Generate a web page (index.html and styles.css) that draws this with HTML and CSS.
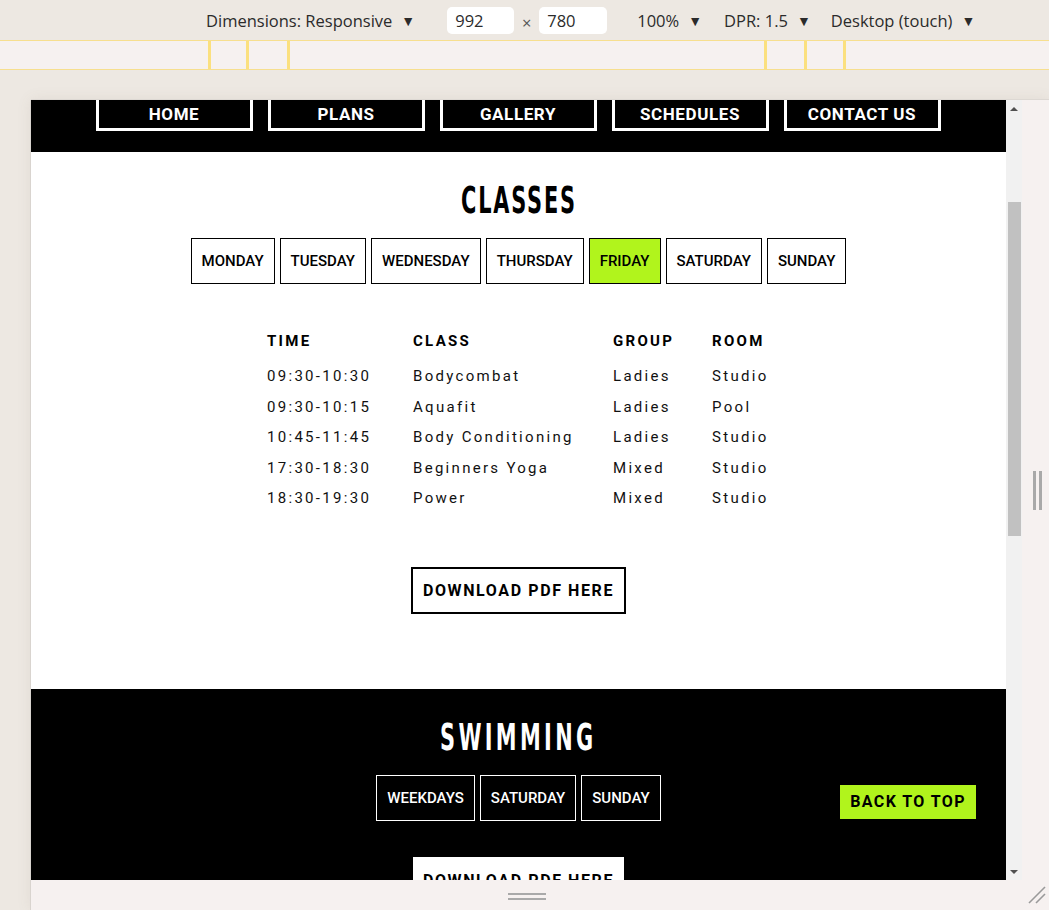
FILE: index.html
```html
<!DOCTYPE html>
<html lang="en">
<head>
<meta charset="utf-8">
<title>Schedules</title>
<link rel="stylesheet" href="styles.css">
</head>
<body>
<div class="toolbar">
  <span class="tb-item tb-dims">Dimensions: Responsive<span class="caret">▼</span></span>
  <span class="tb-size">
    <span class="tb-input">992</span>
    <span class="tb-times">×</span>
    <span class="tb-input tb-input-h">780</span>
  </span>
  <span class="tb-item tb-zoom">100%<span class="caret">▼</span></span>
  <span class="tb-item tb-dpr">DPR: 1.5<span class="caret">▼</span></span>
  <span class="tb-item tb-device">Desktop (touch)<span class="caret">▼</span></span>
</div>

<div class="ruler">
  <span class="mq mq-1"></span>
  <span class="mq mq-2"></span>
  <span class="mq mq-3"></span>
  <span class="mq mq-4"></span>
  <span class="mq mq-5"></span>
  <span class="mq mq-6"></span>
</div>

<div class="stage">
  <div class="frame">
    <div class="viewport">
      <div class="page">
        <header class="site-nav">
          <nav class="nav-list">
            <a class="nav-btn">HOME</a>
            <a class="nav-btn">PLANS</a>
            <a class="nav-btn">GALLERY</a>
            <a class="nav-btn">SCHEDULES</a>
            <a class="nav-btn">CONTACT US</a>
          </nav>
        </header>

        <section class="classes">
          <h2 class="section-title"><span>CLASSES</span></h2>
          <div class="tabs">
            <button class="tab">MONDAY</button>
            <button class="tab">TUESDAY</button>
            <button class="tab">WEDNESDAY</button>
            <button class="tab">THURSDAY</button>
            <button class="tab tab-active">FRIDAY</button>
            <button class="tab">SATURDAY</button>
            <button class="tab">SUNDAY</button>
          </div>
          <table class="timetable">
            <colgroup>
              <col class="col-time"><col class="col-class"><col class="col-group"><col class="col-room">
            </colgroup>
            <thead>
              <tr><th>TIME</th><th>CLASS</th><th>GROUP</th><th>ROOM</th></tr>
            </thead>
            <tbody>
              <tr><td>09:30-10:30</td><td>Bodycombat</td><td>Ladies</td><td>Studio</td></tr>
              <tr><td>09:30-10:15</td><td>Aquafit</td><td>Ladies</td><td>Pool</td></tr>
              <tr><td>10:45-11:45</td><td>Body Conditioning</td><td>Ladies</td><td>Studio</td></tr>
              <tr><td>17:30-18:30</td><td>Beginners Yoga</td><td>Mixed</td><td>Studio</td></tr>
              <tr><td>18:30-19:30</td><td>Power</td><td>Mixed</td><td>Studio</td></tr>
            </tbody>
          </table>
          <div class="download-wrap">
            <a class="download">DOWNLOAD PDF HERE</a>
          </div>
        </section>

        <section class="swimming">
          <h2 class="section-title section-title-wide"><span>SWIMMING</span></h2>
          <div class="tabs">
            <button class="tab tab-dark">WEEKDAYS</button>
            <button class="tab tab-dark">SATURDAY</button>
            <button class="tab tab-dark">SUNDAY</button>
          </div>
          <div class="download-wrap download-wrap-dark">
            <a class="download download-light">DOWNLOAD PDF HERE</a>
          </div>
        </section>
      </div>
      <a class="back-top">BACK TO TOP</a>
    </div>

    <div class="scrollbar">
      <div class="sb-arrow"><span class="tri tri-up"></span></div>
      <div class="sb-track"><div class="sb-thumb"></div></div>
      <div class="sb-arrow"><span class="tri tri-down"></span></div>
    </div>

    <div class="side-strip">
      <span class="grip-v"></span><span class="grip-v"></span>
    </div>

    <div class="bottom-strip">
      <span class="grip-h"></span><span class="grip-h"></span>
    </div>

    <div class="corner">
      <svg width="20" height="20" viewBox="0 0 20 20">
        <line x1="18" y1="2" x2="2" y2="18" stroke="#9a9a9a" stroke-width="1.6"/>
        <line x1="18" y1="9" x2="9" y2="18" stroke="#9a9a9a" stroke-width="1.6"/>
      </svg>
    </div>
  </div>
</div>
</body>
</html>
```

FILE: styles.css
```css
* { box-sizing: border-box; }

html, body {
  margin: 0;
  padding: 0;
}

body {
  width: 1049px;
  height: 910px;
  overflow: hidden;
  background: #ede8e2;
  font-family: Roboto, "Liberation Sans", sans-serif;
}

/* ---------- devtools toolbar ---------- */
.toolbar {
  height: 40px;
  display: flex;
  align-items: center;
  padding-left: 206px;
  font-family: "Open Sans", "Noto Sans", sans-serif;
  font-size: 16.5px;
  color: #2b2b2b;
  white-space: nowrap;
}

.caret {
  font-size: 14px;
  margin-left: 9px;
  position: relative;
  top: -1px;
}

.tb-size {
  display: flex;
  align-items: center;
  margin-left: 32px;
}

.tb-input {
  width: 67px;
  height: 27px;
  background: #fff;
  border-radius: 5px;
  padding-left: 8px;
  line-height: 27px;
}

.tb-input-h { width: 68px; }

.tb-times {
  width: 25px;
  text-align: center;
  color: #555;
  position: relative;
  top: 2px;
}

.tb-zoom { margin-left: 30px; }
.tb-dpr { margin-left: 22px; }
.tb-device { margin-left: 20px; }

/* ---------- ruler ---------- */
.ruler {
  position: relative;
  height: 30px;
  background: #f6f1f0;
  border-top: 1px solid #f7df8f;
  border-bottom: 1px solid #f7df8f;
}

.mq {
  position: absolute;
  top: 0;
  bottom: 0;
  width: 3px;
  background: #fbe07f;
}
.mq-1 { left: 208px; }
.mq-2 { left: 246px; }
.mq-3 { left: 287px; }
.mq-4 { left: 764px; }
.mq-5 { left: 804px; }
.mq-6 { left: 843px; }

/* ---------- stage / frame ---------- */
.stage {
  padding: 30px 0 0 31px;
}

.frame {
  display: grid;
  grid-template-columns: 975px 16px 1fr;
  grid-template-rows: 780px 30px;
  box-shadow: -1px 0 0 #d9d4cf, 0 -1px 0 #ddd8d3, 0 0 14px rgba(120, 100, 80, 0.10);
}

.viewport {
  position: relative;
  overflow: hidden;
  background: #fff;
}

.page {
  width: 975px;
}

/* site nav */
.site-nav {
  background: #000;
  padding-bottom: 21px;
}

.nav-list {
  display: flex;
  justify-content: center;
  gap: 15px;
  padding-right: 1px;
}

.nav-btn {
  width: 157px;
  height: 31px;
  border: 3px solid #fff;
  border-top: 0;
  color: #fff;
  font-weight: 700;
  font-size: 17px;
  letter-spacing: 0.6px;
  line-height: 28px;
  text-align: center;
}

/* sections */
.classes {
  text-align: center;
  padding: 28px 0 75px;
  background: #fff;
}

.swimming {
  text-align: center;
  padding: 28px 0 40px;
  background: #000;
  color: #fff;
}

.section-title {
  margin: 0;
  font-family: "DejaVu Sans Condensed", "DejaVu Sans", sans-serif;
  font-weight: 700;
  font-size: 38px;
  line-height: 40px;
  letter-spacing: 3px;
}

.section-title span {
  display: inline-block;
  transform: scaleX(0.61);
}

.section-title-wide {
  letter-spacing: 5.5px;
}

.tabs {
  display: flex;
  justify-content: center;
  gap: 5px;
  margin-top: 18px;
}

.tab {
  border: 1px solid #000;
  background: #fff;
  color: #000;
  font-family: Roboto, sans-serif;
  font-weight: 500;
  font-size: 15px;
  line-height: 18px;
  padding: 13px 10px;
  margin: 0;
}

.tab-active {
  background: #b1f41c;
}

.tab-dark {
  background: #000;
  color: #fff;
  border-color: #fff;
}

/* timetable */
.timetable {
  margin: 47px auto 0;
  border-collapse: collapse;
  text-align: left;
  table-layout: fixed;
  width: 503px;
}

.col-time { width: 146px; }
.col-class { width: 200px; }
.col-group { width: 99px; }
.col-room { width: 58px; }

.timetable th {
  font-weight: 700;
  font-size: 15px;
  letter-spacing: 2.3px;
  line-height: 20px;
  padding: 0 0 10px;
  color: #000;
  white-space: nowrap;
}

.timetable td {
  font-weight: 400;
  font-size: 15px;
  letter-spacing: 2.3px;
  line-height: 20px;
  padding: 5.25px 0;
  color: #111;
  white-space: nowrap;
}

.download-wrap {
  margin-top: 53px;
}

.download-wrap-dark {
  margin-top: 36px;
}

.download {
  display: inline-block;
  height: 47px;
  border: 2px solid #000;
  padding: 0 10px;
  line-height: 43px;
  font-weight: 700;
  font-size: 16px;
  letter-spacing: 1.6px;
  color: #000;
}

.download-light {
  background: #fff;
  border: 0;
  line-height: 47px;
}

/* back to top overlay */
.back-top {
  position: absolute;
  right: 30px;
  bottom: 61px;
  height: 34px;
  padding: 0 10px;
  background: #b1f41c;
  color: #000;
  font-weight: 700;
  font-size: 16px;
  letter-spacing: 1.4px;
  line-height: 34px;
}

/* scrollbar */
.scrollbar {
  display: flex;
  flex-direction: column;
  background: #f1f1f1;
}

.sb-arrow {
  height: 17px;
  display: flex;
  align-items: center;
  justify-content: center;
}

.tri {
  width: 0;
  height: 0;
  border-left: 4px solid transparent;
  border-right: 4px solid transparent;
}
.tri-up { border-bottom: 4px solid #505050; }
.tri-down { border-top: 4px solid #505050; }

.sb-track {
  flex: 1;
  padding: 85px 1px 0 2px;
}

.sb-thumb {
  height: 334px;
  background: #c1c1c1;
}

/* side + bottom strips */
.side-strip {
  background: #f6f1f0;
  display: flex;
  align-items: center;
  justify-content: center;
  gap: 3px;
  padding-left: 4px;
}

.grip-v {
  width: 3px;
  height: 39px;
  background: #a9a9a9;
}

.bottom-strip {
  grid-column: 1 / span 2;
  background: #f6f1f0;
  display: flex;
  flex-direction: column;
  align-items: center;
  justify-content: center;
  gap: 3px;
  padding-top: 2px;
}

.grip-h {
  width: 38px;
  height: 2px;
  background: #a9a9a9;
}

.corner {
  background: #f6f1f0;
  display: flex;
  align-items: center;
  justify-content: center;
  padding-left: 2px;
}
```
